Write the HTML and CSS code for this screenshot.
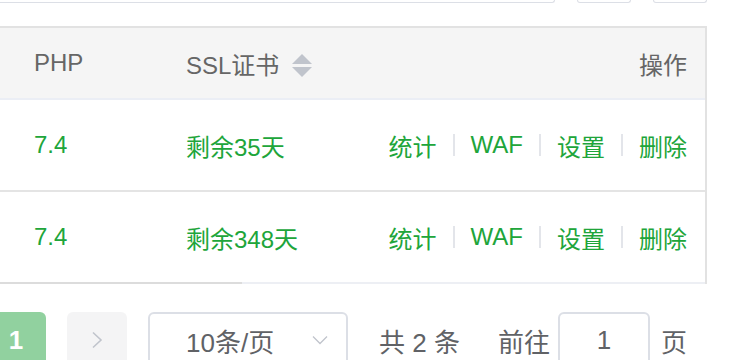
FILE: index.html
```html
<!DOCTYPE html>
<html>
<head>
  <meta charset="UTF-8">
  <title>网站列表</title>
  <link rel="stylesheet" href="styles.css">
</head>
<body>
  <div class="page">
    <div class="topbar">
      <div class="search"></div>
      <div class="tool-btn"></div>
      <div class="tool-btn"></div>
    </div>

    <div class="table">
      <div class="row head">
        <div class="cell col-php">PHP</div>
        <div class="cell col-ssl">SSL证书 <span class="sort"><i class="up"></i><i class="down"></i></span></div>
        <div class="cell col-op">操作</div>
      </div>
      <div class="row">
        <div class="cell col-php green">7.4</div>
        <div class="cell col-ssl green">剩余35天</div>
        <div class="cell col-op">
          <a>统计</a><span class="sep"></span><a>WAF</a><span class="sep"></span><a>设置</a><span class="sep"></span><a>删除</a>
        </div>
      </div>
      <div class="row last">
        <div class="cell col-php green">7.4</div>
        <div class="cell col-ssl green">剩余348天</div>
        <div class="cell col-op">
          <a>统计</a><span class="sep"></span><a>WAF</a><span class="sep"></span><a>设置</a><span class="sep"></span><a>删除</a>
        </div>
      </div>
      <div class="scrollbar"><div class="thumb"></div></div>
    </div>

    <div class="pager">
      <button class="page-num active">1</button>
      <button class="page-next">
        <svg width="14" height="18" viewBox="0 0 14 18"><path d="M3 1.5 L11 9 L3 16.5" fill="none" stroke="#c0c4cc" stroke-width="1.6"/></svg>
      </button>
      <div class="size-select">
        <span>10条/页</span>
        <svg width="16" height="10" viewBox="0 0 16 10"><path d="M1 1.5 L8 8.5 L15 1.5" fill="none" stroke="#c0c4cc" stroke-width="1.3"/></svg>
      </div>
      <span class="total">共 2 条</span>
      <span class="jump">前往</span>
      <div class="jump-input">1</div>
      <span class="jump-end">页</span>
    </div>
  </div>
</body>
</html>
```

FILE: styles.css
```css
body {
  margin: 0;
  background: #fff;
  font-family: "Liberation Sans", "Noto Sans CJK SC", sans-serif;
}
.page {
  width: 742px;
  height: 360px;
  overflow: hidden;
}

/* cut-off search row at the top */
.topbar {
  display: flex;
  gap: 22px;
  margin-left: -20px;
  height: 3px;
}
.topbar > div {
  box-sizing: border-box;
  height: 3px;
  border: 1px solid #dcdfe6;
  border-top: none;
  border-radius: 0 0 6px 6px;
}
.search { width: 575px; }
.tool-btn { width: 54px; }

/* table */
.table {
  box-sizing: border-box;
  margin: 23px 0 0 -14px;
  width: 721px;
  border-top: 2px solid #e2e2e2;
  border-right: 2px solid #e2e2e2;
  font-size: 24px;
}
.row {
  display: grid;
  grid-template-columns: 180px 1fr auto;
  align-items: center;
  height: 90px;
  border-bottom: 2px solid #e4e4e4;
}
.row.head {
  height: 70px;
  background: #f5f5f5;
  color: #666;
  border-bottom: 2px solid #ebeef5;
}
.row.last { border-bottom: none; }
.cell {
  padding: 0 18px 0 20px;
  white-space: nowrap;
}
.col-php { padding-left: 48px; }
.col-op {
  display: flex;
  align-items: center;
  justify-content: flex-end;
}
.green { color: #20a53a; }
.col-op a { color: #20a53a; }
.sep {
  width: 2px;
  height: 22px;
  background: #e3e5ea;
  margin: 0 16px;
}
.sort {
  display: inline-flex;
  flex-direction: column;
  gap: 3px;
  vertical-align: middle;
  margin-left: 6px;
  margin-top: -4px;
}
.sort i {
  width: 0;
  height: 0;
  border-left: 10px solid transparent;
  border-right: 10px solid transparent;
}
.sort .up { border-bottom: 10px solid #c0c4cc; }
.sort .down { border-top: 10px solid #c0c4cc; }

.scrollbar {
  height: 2px;
  background: #edeff4;
}
.scrollbar .thumb {
  width: 256px;
  height: 2px;
  background: #dcdcdc;
}

/* pagination */
.pager {
  display: flex;
  align-items: center;
  margin: 28px 0 0 -14px;
  font-size: 26px;
  color: #606266;
}
.pager button {
  box-sizing: border-box;
  width: 60px;
  height: 56px;
  border: none;
  border-radius: 6px;
  margin-right: 21px;
  padding: 0;
  display: flex;
  align-items: center;
  justify-content: center;
  font-family: inherit;
  font-size: 26px;
}
.page-num.active {
  background: #91d19f;
  color: #fff;
  font-weight: bold;
}
.page-next { background: #f4f4f5; }
.size-select {
  box-sizing: border-box;
  width: 200px;
  height: 56px;
  border: 2px solid #dcdfe6;
  border-radius: 6px;
  display: flex;
  align-items: center;
  justify-content: space-between;
  padding: 0 18px 0 36px;
}
.total { margin-left: 31px; }
.jump { margin-left: 38px; }
.jump-input {
  box-sizing: border-box;
  width: 92px;
  height: 56px;
  margin-left: 8px;
  border: 2px solid #dcdfe6;
  border-radius: 6px;
  display: flex;
  align-items: center;
  justify-content: center;
}
.jump-end { margin-left: 11px; }
```
